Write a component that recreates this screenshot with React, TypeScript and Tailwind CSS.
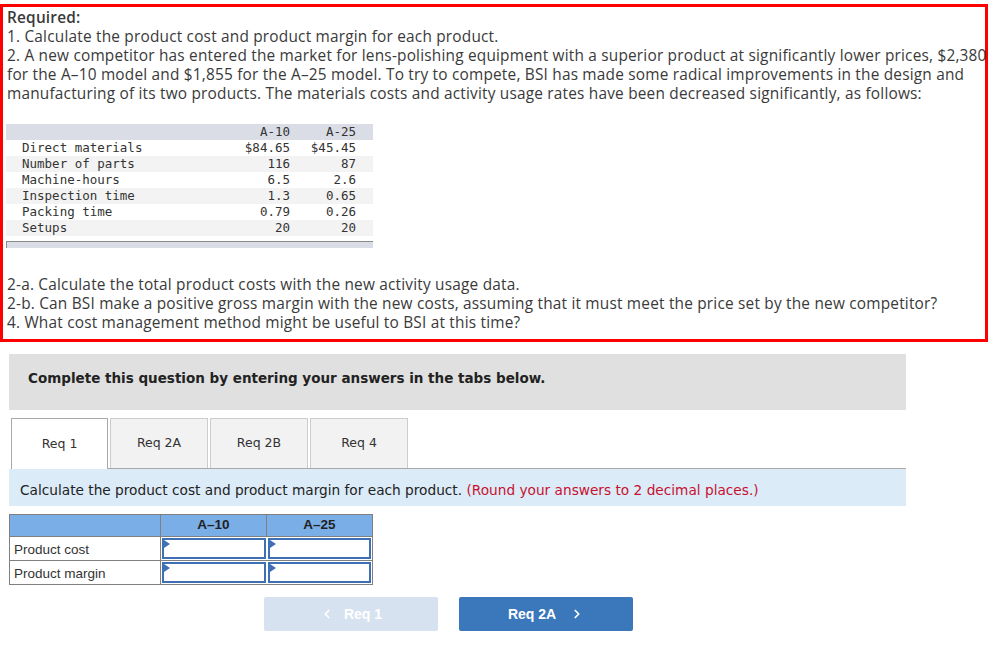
import React from "react";
import { ChevronLeft, ChevronRight } from "lucide-react";

const rows = [
  ["Direct materials", "$84.65", "$45.45"],
  ["Number of parts", "116", "87"],
  ["Machine-hours", "6.5", "2.6"],
  ["Inspection time", "1.3", "0.65"],
  ["Packing time", "0.79", "0.26"],
  ["Setups", "20", "20"],
];

function InputCell() {
  return (
    <div className="relative h-full w-full border-2 border-[#3f70b5] bg-white">
      <div className="absolute left-0 top-0 h-0 w-0 border-y-[4px] border-l-[6px] border-y-transparent border-l-[#3f70b5]" />
    </div>
  );
}

export default function App() {
  return (
    <div className="w-[994px] h-[647px] bg-white pt-[4px]">
      {/* Red question box */}
      <div
        className="w-[988px] h-[338px] border-[3px] border-[#ff0000] pl-[4px] text-[15.4px] tracking-[0.2px] leading-[19px] text-[#3a3a3a]"
        style={{ fontFamily: "'Open Sans', Lato, sans-serif" }}
      >
        <div className="font-semibold pt-[1px] whitespace-nowrap">Required:</div>
        <div className="whitespace-nowrap">1. Calculate the product cost and product margin for each product.</div>
        <div className="whitespace-nowrap">2. A new competitor has entered the market for lens-polishing equipment with a superior product at significantly lower prices, $2,380</div>
        <div className="whitespace-nowrap">for the A–10 model and $1,855 for the A–25 model. To try to compete, BSI has made some radical improvements in the design and</div>
        <div className="whitespace-nowrap">manufacturing of its two products. The materials costs and activity usage rates have been decreased significantly, as follows:</div>

        {/* Data table */}
        <div
          className="mt-[21px] ml-[-1px] w-[367px] text-[12.5px] tracking-normal leading-[16px] text-[#333]"
          style={{ fontFamily: "'DejaVu Sans Mono', 'Liberation Mono', monospace" }}
        >
          <div className="flex h-[16px] bg-[#dadde6]">
            <div className="w-[216px]" />
            <div className="w-[68px] text-right">A-10</div>
            <div className="w-[66px] text-right">A-25</div>
          </div>
          {rows.map((r, i) => (
            <div key={r[0]} className={`flex h-[16px] ${i % 2 === 1 ? "bg-[#f3f3f3]" : "bg-white"}`}>
              <div className="w-[216px] pl-[16px] whitespace-nowrap">{r[0]}</div>
              <div className="w-[68px] text-right whitespace-nowrap">{r[1]}</div>
              <div className="w-[66px] text-right whitespace-nowrap">{r[2]}</div>
            </div>
          ))}
          <div className="mt-[5px] h-[7px] border-t border-l border-[#8a8a8a] bg-[#dadde6]" />
        </div>

        <div className="mt-[27px] whitespace-nowrap">2-a. Calculate the total product costs with the new activity usage data.</div>
        <div className="whitespace-nowrap">2-b. Can BSI make a positive gross margin with the new costs, assuming that it must meet the price set by the new competitor?</div>
        <div className="whitespace-nowrap">4. What cost management method might be useful to BSI at this time?</div>
      </div>

      {/* Instructions bar */}
      <div
        className="ml-[9px] mt-[12px] w-[897px] h-[56px] bg-[#e0e0e0] pt-[15px] pl-[19px] text-[13.5px] leading-[18px] font-bold text-[#222]"
        style={{ fontFamily: "'DejaVu Sans', Verdana, sans-serif" }}
      >
        Complete this question by entering your answers in the tabs below.
      </div>

      {/* Tabs */}
      <div
        className="ml-[9px] mt-[8px] w-[897px] flex items-end text-[12.5px] text-[#333]"
        style={{ fontFamily: "'DejaVu Sans', Verdana, sans-serif" }}
      >
        <div className="ml-[2px] w-[97px] h-[51px] border border-b-0 border-[#a8a8a8] bg-white flex items-center justify-center">Req 1</div>
        <div className="flex-1 flex items-end border-b border-[#a8a8a8] h-[51px]">
          <div className="ml-[2px] w-[98px] h-[50px] border border-b-0 border-[#cccccc] bg-[#f2f2f2] flex items-center justify-center">Req 2A</div>
          <div className="ml-[2px] w-[98px] h-[50px] border border-b-0 border-[#cccccc] bg-[#f2f2f2] flex items-center justify-center">Req 2B</div>
          <div className="ml-[2px] w-[98px] h-[50px] border border-b-0 border-[#cccccc] bg-[#f2f2f2] flex items-center justify-center">Req 4</div>
        </div>
      </div>

      {/* Blue instruction */}
      <div
        className="ml-[9px] w-[897px] h-[37px] bg-[#dbebf8] flex items-center pt-[5px] pl-[11px] text-[13.7px] text-[#222] whitespace-nowrap"
        style={{ fontFamily: "'DejaVu Sans', Verdana, sans-serif" }}
      >
        Calculate the product cost and product margin for each product.&nbsp;
        <span className="text-[#c8102e]">(Round your answers to 2 decimal places.)</span>
      </div>

      {/* Answer table */}
      <div
        className="ml-[9px] mt-[8px] w-[364px] border border-[#808080] text-[13.5px] text-[#222]"
        style={{ fontFamily: "'Liberation Sans', Arial, sans-serif" }}
      >
        <div className="flex h-[22px] bg-[#7aaee6] border-b border-[#808080]">
          <div className="w-[151px] border-r border-[#808080]" />
          <div className="w-[106px] border-r border-[#808080] flex items-center justify-center font-bold">A–10</div>
          <div className="flex-1 flex items-center justify-center font-bold">A–25</div>
        </div>
        <div className="flex h-[24px] border-b border-[#808080]">
          <div className="w-[151px] border-r border-[#808080] flex items-center pt-[3px] pl-[4px] text-[#333]">Product cost</div>
          <div className="w-[106px] p-[1px]"><InputCell /></div>
          <div className="flex-1 p-[1px]"><InputCell /></div>
        </div>
        <div className="flex h-[23px]">
          <div className="w-[151px] border-r border-[#808080] flex items-center pt-[3px] pl-[4px] text-[#333]">Product margin</div>
          <div className="w-[106px] p-[1px]"><InputCell /></div>
          <div className="flex-1 p-[1px]"><InputCell /></div>
        </div>
      </div>

      {/* Nav buttons */}
      <div
        className="ml-[264px] mt-[12px] flex gap-[21px] text-[14px] font-bold text-white"
        style={{ fontFamily: "'Liberation Sans', Arial, sans-serif" }}
      >
        <div className="w-[174px] h-[34px] rounded-[2px] bg-[#d6e2f0] flex items-center justify-center gap-[10px]">
          <ChevronLeft size={14} strokeWidth={3} />
          <span>Req 1</span>
        </div>
        <div className="w-[174px] h-[34px] rounded-[2px] bg-[#3a77bb] flex items-center justify-center gap-[14px]">
          <span>Req 2A</span>
          <ChevronRight size={14} strokeWidth={3} />
        </div>
      </div>
    </div>
  );
}
